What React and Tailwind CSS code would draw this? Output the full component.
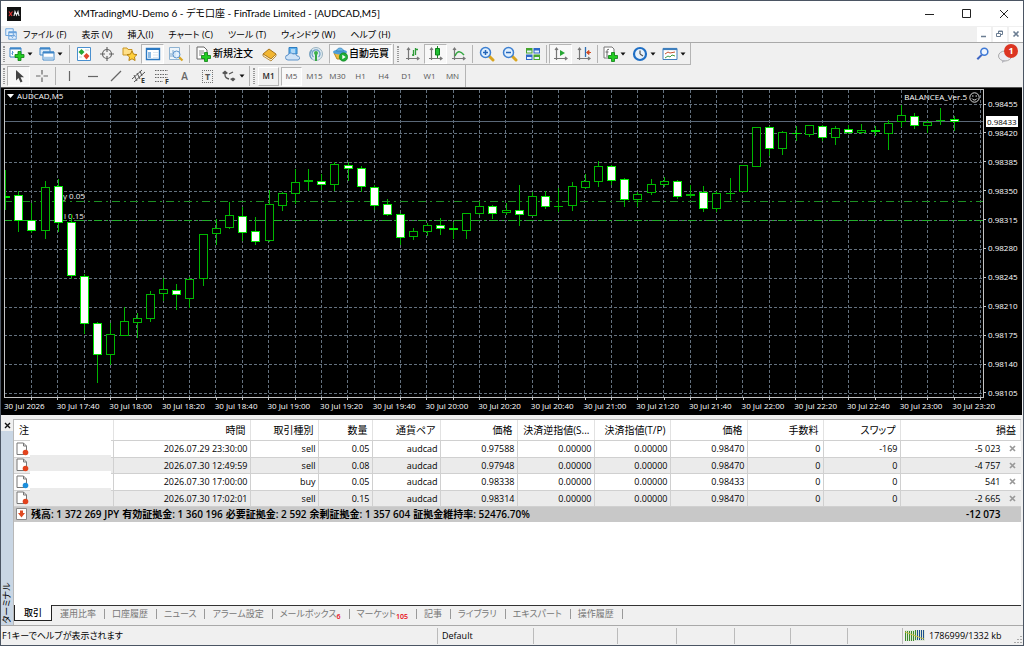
import { useState } from 'react'
import clsx from 'clsx'

const MENUS = ['ファイル (F)', '表示 (V)', '挿入(I)', 'チャート (C)', 'ツール (T)', 'ウィンドウ (W)', 'ヘルプ (H)']
const TIMEFRAMES = ['M1', 'M5', 'M15', 'M30', 'H1', 'H4', 'D1', 'W1', 'MN']

const PRICES = [
  '0.98455', '0.98420', '0.98385', '0.98350', '0.98315', '0.98280',
  '0.98245', '0.98210', '0.98175', '0.98140', '0.98105',
]
const TIMES = [
  '30 Jul 2026', '30 Jul 17:40', '30 Jul 18:00', '30 Jul 18:20', '30 Jul 18:40', '30 Jul 19:00', '30 Jul 19:20',
  '30 Jul 19:40', '30 Jul 20:00', '30 Jul 20:20', '30 Jul 20:40', '30 Jul 21:00', '30 Jul 21:20', '30 Jul 21:40',
  '30 Jul 22:00', '30 Jul 22:20', '30 Jul 22:40', '30 Jul 23:00', '30 Jul 23:20',
]

// [high, body top, body bottom, low, bearish], three units to a pixel
const CANDLES = [
  [247, 325, 330, 365, 1], [308, 322, 398, 432, 1], [346, 397, 428, 435, 1], [280, 297, 428, 452, 0],
  [273, 295, 404, 432, 1], [378, 403, 565, 574, 1], [557, 565, 709, 737, 1], [703, 704, 800, 886, 1],
  [706, 739, 802, 830, 0], [657, 700, 744, 745, 0], [674, 691, 704, 750, 0], [610, 618, 694, 703, 0],
  [570, 603, 617, 638, 0], [588, 605, 620, 666, 1], [567, 573, 632, 661, 0], [437, 439, 572, 594, 0],
  [392, 420, 439, 470, 0], [343, 382, 419, 422, 0], [357, 383, 434, 459, 1], [388, 430, 461, 470, 1],
  [305, 349, 459, 461, 0], [313, 314, 353, 370, 0], [244, 283, 317, 348, 0], [244, 277, 283, 308, 0],
  [257, 279, 291, 305, 1], [222, 229, 290, 308, 0], [221, 232, 242, 278, 1], [233, 240, 296, 311, 1],
  [292, 297, 353, 367, 1], [332, 349, 380, 385, 1], [376, 379, 449, 470, 1], [420, 430, 448, 456, 0],
  [405, 412, 433, 443, 0], [391, 412, 424, 441, 1], [402, 420, 427, 453, 1], [376, 376, 429, 452, 0],
  [343, 354, 377, 380, 0], [352, 354, 377, 392, 1], [346, 366, 374, 380, 0], [292, 366, 380, 413, 1],
  [313, 324, 383, 383, 0], [308, 325, 357, 362, 1], [300, 355, 355, 372, 0], [282, 295, 353, 368, 0],
  [258, 280, 299, 303, 0], [220, 235, 281, 296, 0], [232, 233, 278, 290, 1], [270, 274, 335, 356, 1],
  [313, 319, 335, 356, 0], [274, 289, 315, 322, 0], [268, 280, 290, 296, 0], [275, 280, 328, 332, 1],
  [292, 319, 325, 330, 0], [294, 313, 362, 371, 1], [308, 314, 362, 371, 0], [269, 315, 315, 335, 0],
  [232, 232, 311, 311, 0], [118, 118, 237, 238, 0], [113, 118, 182, 204, 1], [128, 133, 182, 200, 0],
  [115, 134, 139, 158, 1], [110, 112, 140, 148, 0], [110, 115, 150, 158, 1], [114, 121, 150, 170, 0],
  [111, 122, 134, 138, 1], [109, 127, 134, 137, 0], [113, 126, 133, 144, 1], [97, 104, 137, 185, 0],
  [52, 82, 103, 118, 0], [76, 85, 113, 122, 1], [97, 103, 113, 134, 0], [59, 97, 97, 110, 0],
  [85, 93, 101, 128, 1],
]

const COLUMNS = [
  { label: '注', width: 'w-[99px]' },
  { label: '時間', width: 'w-[137px]' },
  { label: '取引種別', width: 'w-[68px]' },
  { label: '数量', width: 'w-[54px]' },
  { label: '通貨ペア', width: 'w-[68px]' },
  { label: '価格', width: 'w-[77px]' },
  { label: '決済逆指値(S...', width: 'w-[77px]' },
  { label: '決済指値(T/P)', width: 'w-[76px]' },
  { label: '価格', width: 'w-[77px]' },
  { label: '手数料', width: 'w-[76px]' },
  { label: 'スワップ', width: 'w-[77px]' },
  { label: '損益', width: '' },
]

const ORDERS = [
  ['2026.07.29 23:30:00', 'sell', '0.05', 'audcad', '0.97588', '0.00000', '0.00000', '0.98470', '0', '-169', '-5 023'],
  ['2026.07.30 12:49:59', 'sell', '0.08', 'audcad', '0.97948', '0.00000', '0.00000', '0.98470', '0', '0', '-4 757'],
  ['2026.07.30 17:00:00', 'buy', '0.05', 'audcad', '0.98338', '0.00000', '0.00000', '0.98433', '0', '0', '541'],
  ['2026.07.30 17:02:01', 'sell', '0.15', 'audcad', '0.98314', '0.00000', '0.00000', '0.98470', '0', '0', '-2 665'],
]

const TABS = [
  { label: '取引' },
  { label: '運用比率' },
  { label: '口座履歴' },
  { label: 'ニュース' },
  { label: 'アラーム設定' },
  { label: 'メールボックス', count: 6 },
  { label: 'マーケット', count: 105 },
  { label: '記事' },
  { label: 'ライブラリ' },
  { label: 'エキスパート' },
  { label: '操作履歴' },
]

function Icon({ children, size = 16 }) {
  return (
    <svg width={size} height={size} viewBox="0 0 16 16" fill="none" className="shrink-0" aria-hidden="true">
      {children}
    </svg>
  )
}

function Plus({ x = 11, y = 11 }) {
  return (
    <path
      transform={`translate(${x} ${y})`}
      d="M-1.5-4.500h3v3h3v3h-3v3h-3v-3h-3v-3h3z"
      fill="#22cc22"
      stroke="#0a7d12"
      strokeWidth=".8"
    />
  )
}

function Axes() {
  return <path d="M3.500 2v12M1 12.500h13M2 4l1.500-2L5 4M12 11l2 1.500-2 1.500" stroke="#777" strokeWidth="1.200" />
}

function Magnifier({ minus }) {
  return (
    <Icon>
      <path d="m10 10 4 4" stroke="#d9a520" strokeWidth="3" strokeLinecap="round" />
      <circle cx="6.500" cy="6.500" r="5" fill="#dff0ff" stroke="#3d7fd0" strokeWidth="1.500" />
      <path d={minus ? 'M4 6.500h5' : 'M4 6.500h5M6.500 4v5'} stroke="#2565b8" strokeWidth="1.500" />
    </Icon>
  )
}

function ToolButton({ label, pressed, children }) {
  return (
    <button
      type="button"
      aria-label={label}
      className={clsx(
        'flex h-5 w-[23px] shrink-0 items-center justify-center border',
        pressed ? 'border-r-white border-b-white border-t-[#b5b5b5] border-l-[#b5b5b5] bg-[#f8f8f8]' : 'border-transparent'
      )}
    >
      {children}
    </button>
  )
}

function DropButton({ label, children }) {
  return (
    <button type="button" aria-label={label} className="mr-1 flex h-5 w-[26px] shrink-0 items-center pl-[2px]">
      {children}
      <Arrow />
    </button>
  )
}

function Arrow() {
  return (
    <svg width="6" height="4" viewBox="0 0 6 4" className="ml-[2px] shrink-0" aria-hidden="true">
      <path d="M.5.500h5L3 3.500z" fill="#111" />
    </svg>
  )
}

function Separator() {
  return <div className="mx-[2px] h-[18px] w-px shrink-0 bg-[#b4b4b4]" />
}

function Grip() {
  return <div className="mx-[2px] h-4 w-[2px] shrink-0 border-x border-dotted border-[#999]" />
}

function TitleBar() {
  return (
    <header className="flex h-[25px] items-center bg-white pl-[6px]">
      <svg width="14" height="14" viewBox="0 0 14 14" aria-label="XM">
        <rect width="14" height="14" fill="#111" />
        <path d="M2 4.500 5 9M5.500 4.500 2 9" stroke="#d33" strokeWidth="1.200" />
        <path d="M7 9l1-4.500L9.500 8 11 4.500 12 9" stroke="#eee" strokeWidth="1.100" fill="none" />
      </svg>
      <h1 className="ml-[53px] grow font-['Lato','Noto_Sans_CJK_JP',sans-serif] text-[10px]">
        XMTradingMU-Demo 6 - デモ口座 - FinTrade Limited - [AUDCAD,M5]
      </h1>
      <div className="flex text-[#222]">
        <button type="button" aria-label="最小化" className="flex w-[37px] justify-center">
          <svg width="10" height="10"><path d="M0 5.500h9" stroke="currentColor" /></svg>
        </button>
        <button type="button" aria-label="最大化" className="flex w-[37px] justify-center">
          <svg width="10" height="10"><path d="M.5.500h8v8h-8z" fill="none" stroke="currentColor" /></svg>
        </button>
        <button type="button" aria-label="閉じる" className="flex w-[38px] justify-center">
          <svg width="10" height="10"><path d="m1 1 8 8m0-8L1 9" stroke="currentColor" /></svg>
        </button>
      </div>
    </header>
  )
}

function MenuBar() {
  return (
    <nav className="flex h-[17px] items-center border-b border-[#a9a9a9] pl-1">
      <Icon size={12}>
        <path d="M1 1h10v9H1zM5 5h10v10H5z" fill="#e6f2fd" stroke="#6aa3dc" strokeWidth="1.300" />
        <path d="M5 6h10" stroke="#6aa3dc" strokeWidth="2" />
        <path d="m6 12 2-2 2 3 2-4 2 3" stroke="#5590d0" />
      </Icon>
      <div className="flex grow pl-[6px]">
        {MENUS.map((name) => (
          <button key={name} type="button" className="mr-[15px] whitespace-nowrap text-[9px] leading-[15px]">
            {name}
          </button>
        ))}
      </div>
      <div className="flex gap-[2px] text-[#6b7d92]">
        <button type="button" aria-label="ウィンドウを最小化" className="flex h-[15px] w-[14px] items-center justify-center bg-white">
          <svg width="8" height="8"><path d="M1 6.500h5" stroke="currentColor" strokeWidth="1.500" /></svg>
        </button>
        <button type="button" aria-label="元に戻す" className="flex h-[15px] w-[14px] items-center justify-center bg-white">
          <svg width="8" height="8"><path d="M.5 3.500h4v3h-4zM2.500 3V1h4v3.500h-2M2 1.500h5" fill="none" stroke="currentColor" /></svg>
        </button>
        <button type="button" aria-label="ウィンドウを閉じる" className="flex h-[15px] w-[14px] items-center justify-center bg-white">
          <svg width="8" height="8"><path d="m1.500 1.500 5 5m0-5-5 5" stroke="currentColor" strokeWidth="1.600" /></svg>
        </button>
      </div>
    </nav>
  )
}

function MainToolbar() {
  return (
    <div className="flex h-[22px]">
      <div className="flex h-[22px] items-center border-r border-b border-[#b4b4b4]">
        <Grip />
        <DropButton label="新規チャート">
          <Icon>
            <path d="M1 2h11v9H1z" fill="#fff" stroke="#3e86c8" />
            <path d="M1 2.500h11" stroke="#3e86c8" strokeWidth="2" />
            <path d="M3.500 5v4M2.500 8l2-2" stroke="#5a9ad5" />
            <Plus x={10.5} y={10} />
          </Icon>
        </DropButton>
        <DropButton label="プロファイル">
          <Icon>
            <path d="M1 2h10v7H1z" fill="#dcebf8" stroke="#3e86c8" />
            <path d="M4 6h11v8H4z" fill="#fff" stroke="#3e86c8" />
            <path d="M1 2.500h10M4 6.500h11" stroke="#3e86c8" strokeWidth="2" />
            <path d="M4.500 12h10" stroke="#a8cbea" strokeWidth="2.500" />
          </Icon>
        </DropButton>
        <Separator />
        <ToolButton label="気配値表示">
          <Icon>
            <path d="M1.500 1.500h13v13h-13z" fill="#fff" stroke="#4a90cf" />
            <path d="M5.500 3 8.500 6l-3 3-3-3z" fill="#25a835" />
            <path d="m10.500 7 3 3-3 3.500-3-3.500z" fill="#e2482e" />
            <path d="M3 11h3M9 4h4" stroke="#c7d6e4" />
          </Icon>
        </ToolButton>
        <ToolButton label="データウィンドウ">
          <Icon>
            <circle cx="8" cy="8" r="4.500" stroke="#666" strokeWidth="1.200" />
            <path d="M8 1v5M8 10v5M1 8h5M10 8h5" stroke="#666" strokeWidth="1.200" />
          </Icon>
        </ToolButton>
        <ToolButton label="ナビゲーター">
          <Icon>
            <path d="M1 2h4l1 1.500h4V9H1z" fill="#ffe08a" stroke="#c99522" />
            <path d="m10 5 1.600 3.200 3.400.4-2.500 2.400.6 3.500-3.100-1.700-3.100 1.700.6-3.500L5 8.600l3.400-.4z" fill="#ffd13b" stroke="#b98312" />
          </Icon>
        </ToolButton>
        <ToolButton label="ターミナル" pressed>
          <Icon>
            <path d="M1.500 2.500h13v11h-13z" fill="#fff" stroke="#2b79c2" strokeWidth="1.400" />
            <path d="M1.500 3h13" stroke="#2b79c2" strokeWidth="2" />
            <path d="M3 6h3v6H3z" fill="#8ebbe4" />
            <path d="M8 6.500h5M8 9h5M8 11.500h5" stroke="#dce6ef" />
          </Icon>
        </ToolButton>
        <ToolButton label="ストラテジーテスター">
          <Icon>
            <path d="M1.500 1.500h10v12h-10z" fill="#eef5fb" stroke="#8fb3d2" />
            <path d="M3 11V7M5 11V4M7 11V6" stroke="#7fa9cf" />
            <path d="m11 11 3.500 3.500" stroke="#d9a520" strokeWidth="2.200" />
            <circle cx="8.500" cy="8.500" r="3.500" fill="#dff0ff" fillOpacity=".7" stroke="#5b93cc" />
          </Icon>
        </ToolButton>
        <Separator />
        <button type="button" className="flex h-5 w-[66px] shrink-0 items-center gap-[2px] pl-[3px] text-[10px] font-medium whitespace-nowrap">
          <Icon>
            <path d="M2 1h7l3 3v9H2z" fill="#fff" stroke="#666" />
            <path d="M4 5h5M4 7h5M4 9h3" stroke="#888" />
            <Plus />
          </Icon>
          新規注文
        </button>
        <ToolButton label="MetaEditor">
          <Icon>
            <path d="m1 8 6-5 7 5-5 5z" fill="#f2b632" stroke="#a8741a" />
            <path d="m1 8 0 2 8 5 5-5V8l-5 5z" fill="#fff3cf" stroke="#a8741a" strokeWidth=".8" />
          </Icon>
        </ToolButton>
        <ToolButton label="VPS">
          <Icon>
            <path d="M4 1.500h8V8H4z" fill="#5fb1ee" stroke="#2d7cc0" />
            <path d="M6 4h4M6 6h4" stroke="#fff" />
            <path d="M3 14a2.500 2.500 0 0 1 0-5 3 3 0 0 1 5-1 3 3 0 0 1 4 2 2 2 0 0 1 1 4z" fill="#cfe3f7" stroke="#5f93c9" />
          </Icon>
        </ToolButton>
        <ToolButton label="シグナル">
          <Icon>
            <circle cx="8" cy="8" r="6.500" fill="#dfeaf0" stroke="#9bb3c0" />
            <path d="M5.500 11a4 4 0 1 1 5 0M4 13a6 6 0 0 1 0-9" stroke="#6d9fc7" strokeWidth="1.200" />
            <path d="M8 7v8" stroke="#36a743" strokeWidth="2" />
            <circle cx="8" cy="7" r="2" fill="#3db14a" />
          </Icon>
        </ToolButton>
        <button type="button" className="ml-[2px] flex h-5 w-[63px] shrink-0 items-center gap-px border border-t-[#b5b5b5] border-r-white border-b-white border-l-[#b5b5b5] bg-[#f8f8f8] pl-[2px] text-[10px] font-medium whitespace-nowrap">
          <Icon>
            <path d="M2 7h12l-2 6H5z" fill="#f1bd3e" stroke="#b98a20" />
            <ellipse cx="8" cy="6" rx="7" ry="2.500" fill="#4f9fd8" />
            <path d="M4.500 5C5 1 11 1 11.500 5z" fill="#6db7e8" stroke="#3380b8" strokeWidth=".7" />
            <circle cx="11.500" cy="11" r="4.200" fill="#1fae36" stroke="#0b7a1e" strokeWidth=".6" />
            <path d="M10.300 8.800v4.400l3.400-2.200z" fill="#fff" />
          </Icon>
          自動売買
        </button>
        <div className="mx-px h-5 w-px bg-[#b4b4b4]" />
        <Grip />
        <ToolButton label="バーチャート">
          <Icon>
            <Axes />
            <path d="M8.500 4v6M8.500 9H7M10.500 2v7M10.500 3.500H13" stroke="#2d9b37" strokeWidth="1.300" />
          </Icon>
        </ToolButton>
        <ToolButton label="ローソク足" pressed>
          <Icon>
            <Axes />
            <path d="M9.500 0v12" stroke="#188a24" />
            <path d="M7.500 2.500h4v6.500h-4z" fill="#1fbf32" stroke="#0d7f1b" />
          </Icon>
        </ToolButton>
        <ToolButton label="ラインチャート">
          <Icon>
            <Axes />
            <path d="M4 10c2-5 5-6 9-1" stroke="#36a743" strokeWidth="1.400" />
          </Icon>
        </ToolButton>
        <Separator />
        <ToolButton label="ズームイン"><Magnifier /></ToolButton>
        <ToolButton label="ズームアウト"><Magnifier minus /></ToolButton>
        <ToolButton label="ウィンドウの整列">
          <Icon>
            <path d="M1 2h6.500v5.500H1zM8.500 8.500H15V14H8.500z" fill="#45a52d" />
            <path d="M8.500 2H15v5.500H8.500zM1 8.500h6.500V14H1z" fill="#2e68c8" />
            <path d="M2 4.500h4.500v2H2zM9.500 4.500H14v2H9.500zM2 11h4.500v2H2zM9.500 11H14v2H9.500z" fill="#e8f3ff" />
          </Icon>
        </ToolButton>
        <Separator />
        <ToolButton label="自動スクロール" pressed>
          <Icon>
            <Axes />
            <path d="M7 4v6l5-3z" fill="#27a735" />
          </Icon>
        </ToolButton>
        <ToolButton label="チャートの右端移動">
          <Icon>
            <Axes />
            <path d="M9.500 1v10" stroke="#2d6fb5" strokeWidth="1.300" />
            <path d="M15 6.500h-4M13 4.500l-2.500 2L13 8.500z" fill="#cf4c25" stroke="#cf4c25" />
          </Icon>
        </ToolButton>
        <Separator />
        <DropButton label="インディケーター">
          <Icon>
            <path d="M2 1h8l2 2v9H2z" fill="#fff" stroke="#777" />
            <path d="M7 3.500c-1.500-.5-2 0-2 2V11M3.500 6h3" stroke="#666" />
            <Plus />
          </Icon>
        </DropButton>
        <DropButton label="時間足設定">
          <Icon>
            <circle cx="8" cy="8" r="6" fill="#e8f2fb" stroke="#1f6fc5" strokeWidth="2.200" />
            <path d="M8 8V4.500M8 8l3 2" stroke="#555" strokeWidth="1.200" />
          </Icon>
        </DropButton>
        <DropButton label="定型チャート">
          <Icon>
            <path d="M1 2.500h14v11H1z" fill="#fff" stroke="#3e7fbd" />
            <path d="M1 3h14" stroke="#3e7fbd" strokeWidth="2.200" />
            <path d="m3 8 3-2 2 1 5-1" stroke="#c65332" />
            <path d="m3 12 3-2 2 1 2-2 3 1" stroke="#3f9b47" />
          </Icon>
        </DropButton>
      </div>
      <div className="ml-auto flex items-center gap-2 pr-[5px]">
        <button type="button" aria-label="検索">
          <Icon size={14}>
            <circle cx="9.500" cy="5.500" r="4" fill="#eef5ff" stroke="#3f7ad6" strokeWidth="1.800" />
            <path d="m6.500 9-5 5" stroke="#3f66c4" strokeWidth="2.400" />
          </Icon>
        </button>
        <button type="button" aria-label="通知 1件" className="relative flex h-5 w-5 items-end">
          <Icon>
            <ellipse cx="7" cy="8" rx="6.500" ry="5" fill="#ececf0" stroke="#aaa" />
            <path d="M4 12v3l4-2.500z" fill="#b9b9c0" />
          </Icon>
          <span className="absolute top-0 right-0 h-[14px] w-[14px] rounded-full bg-[#dc3522] text-center text-[9px] leading-[14px] font-bold text-white">
            1
          </span>
        </button>
      </div>
    </div>
  )
}

function LineToolbar() {
  const [active, setActive] = useState('M5')
  return (
    <div className="flex h-[22px] items-center">
      <Grip />
      <ToolButton label="カーソル" pressed>
        <Icon>
          <path d="M5 2v10.500l2.500-2.500 2 4.500 2-1-2-4.200H13z" fill="#444" />
        </Icon>
      </ToolButton>
      <ToolButton label="クロスヘア">
        <Icon>
          <path d="M8 2v4.500M8 9.500V14M2 8h4.500M9.500 8H14" stroke="#666" strokeWidth="1.200" />
        </Icon>
      </ToolButton>
      <Separator />
      <ToolButton label="垂直線"><Icon><path d="M7.500 3v10" stroke="#666" strokeWidth="1.200" /></Icon></ToolButton>
      <ToolButton label="水平線"><Icon><path d="M3 8.500h10" stroke="#666" strokeWidth="1.200" /></Icon></ToolButton>
      <ToolButton label="トレンドライン"><Icon><path d="M3 13 13 3" stroke="#666" strokeWidth="1.200" /></Icon></ToolButton>
      <ToolButton label="等距離チャネル">
        <Icon>
          <path d="m1 11 10-9M3 14 14 4M3 7l3 6M6 5l3 6M9 3l2 5" stroke="#555" />
          <text x="10" y="15" fontSize="7" fill="#333" fontWeight="bold">E</text>
        </Icon>
      </ToolButton>
      <ToolButton label="フィボナッチ">
        <Icon>
          <path d="M1 2.500h13M1 6.500h13M1 9.500h13M1 13.500h8" stroke="#666" strokeDasharray="1.500 1" />
          <text x="11" y="15.500" fontSize="7" fill="#333" fontWeight="bold">F</text>
        </Icon>
      </ToolButton>
      <ToolButton label="テキスト"><span className="text-[10px] font-semibold text-[#666]">A</span></ToolButton>
      <ToolButton label="ラベル">
        <span className="flex h-[13px] w-[11px] items-center justify-center border border-dotted border-[#777] text-[9px] leading-none font-bold text-[#555]">
          T
        </span>
      </ToolButton>
      <DropButton label="矢印">
        <Icon>
          <path d="m1 5 3-2.500L7 5 4 7zM9 11l3-1.500 2.500 1.500-2.500 2.500z" fill="#555" />
          <path d="M4 7c0 3 2 3.500 4 4M8 6l4-2" stroke="#555" strokeWidth="1.300" />
        </Icon>
      </DropButton>
      <div className="mr-px h-5 w-px bg-[#b4b4b4]" />
      <Grip />
      <div className="flex h-full items-center border-r border-[#b4b4b4] pl-px text-[8px] text-[#555]">
        {TIMEFRAMES.map((tf) => (
          <button
            key={tf}
            type="button"
            onClick={() => setActive(tf)}
            className={clsx(
              'mr-[2px] h-[19px] w-[21px] border',
              tf === active && 'border-t-[#b5b5b5] border-r-white border-b-white border-l-[#b5b5b5] bg-[#f8f8f8]',
              tf !== active && tf === 'M1' && 'border-t-white border-r-[#b5b5b5] border-b-[#b5b5b5] border-l-white font-semibold text-[#222]',
              tf !== active && tf !== 'M1' && 'border-transparent'
            )}
          >
            {tf}
          </button>
        ))}
      </div>
    </div>
  )
}

function Candle({ index, data }) {
  const [high, top, bottom, low, bearish] = data
  const x = Math.round(1 + index * 13.175)
  const y = (v) => Math.round(v / 3) - 2
  const height = Math.max(y(bottom) - y(top), 1)
  return (
    <g>
      <rect x={x} y={y(high)} width="1" height={y(low) - y(high)} fill="#00b400" />
      <rect x={x - 4} y={y(top)} width="9" height={height} fill={bearish ? '#00e800' : '#00b800'} />
      {height > 2 && <rect x={x - 3} y={y(top) + 1} width="7" height={height - 2} fill={bearish ? '#fff' : '#000'} />}
    </g>
  )
}

function Chart() {
  const gridX = Array.from({ length: 37 }, (_, i) => Math.round(27 + i * 26.35) + 0.5)
  const gridY = Array.from({ length: 11 }, (_, i) => Math.round(14 + i * 28.93) + 0.5)
  return (
    <section aria-label="AUDCAD,M5" className="mr-px border-t border-[#555] bg-black pt-px pl-[3px] text-[8px] text-white">
      <div className="flex">
        <div className="relative h-[309px] min-w-0 grow border border-[#c4c4c4]">
          <svg viewBox="1 0 978 307" preserveAspectRatio="none" className="h-full w-full overflow-hidden" role="img" aria-label="ローソク足チャート">
            <g stroke="#64717e" strokeDasharray="3 2">
              {gridX.map((x) => <path key={x} d={`M${x} 0V307`} />)}
              {gridY.map((y) => <path key={y} d={`M0 ${y}H980`} />)}
            </g>
            <path d="M0 31.500H980" stroke="#5a6878" />
            <g stroke="#1c9022" strokeDasharray="8 4 2 4">
              <path d="M0 111.500H980" />
              <path d="M0 130.500H980" stroke="#22b02a" />
            </g>
            <text x="59" y="109" fontSize="8" fill="#eee">y 0.05</text>
            <text x="60" y="129" fontSize="8" fill="#eee">l 0.15</text>
            {CANDLES.map((data, i) => <Candle key={i} index={i} data={data} />)}
          </svg>
          <div className="absolute top-0 left-[2px] flex items-center gap-[3px] leading-3">
            <svg width="7" height="4"><path d="M0 0h7L3.500 4z" fill="#fff" /></svg>
            AUDCAD,M5
          </div>
          <div className="absolute top-px right-[3px] flex items-center gap-[2px] leading-3">
            BALANCEA_Ver.5
            <svg width="11" height="11" viewBox="0 0 11 11" fill="none" stroke="#ddd">
              <circle cx="5.500" cy="5.500" r="4.700" />
              <path d="M3 4h1.500M6.500 4H8M3 6.500c1 2 4 2 5 0" />
            </svg>
          </div>
        </div>
        <div className="relative -mb-px flex w-[38px] shrink-0 flex-col justify-between pt-[9px] leading-3">
          {PRICES.map((price) => (
            <div key={price} className="flex items-center gap-[2px]">
              <span className="h-px w-[2px] bg-[#c4c4c4]" />
              {price}
            </div>
          ))}
          <div className="absolute top-[27px] left-[2px] bg-white px-px leading-[11px] text-black">0.98433</div>
        </div>
      </div>
      <div className="mr-[38px] flex justify-between pr-[3px] pl-[27px]">
        {gridX.map((x) => <span key={x} className="h-[2px] w-px bg-[#c4c4c4]" />)}
      </div>
      <div className="mr-[17px] grid h-[15px] grid-cols-[repeat(19,minmax(0,1fr))] leading-3">
        {TIMES.map((time) => <span key={time} className="whitespace-nowrap">{time}</span>)}
      </div>
    </section>
  )
}

function OrderIcon({ type }) {
  return (
    <svg width="13" height="14" viewBox="0 0 13 14" className="ml-[2px]" aria-hidden="true">
      <path d="M1 1h6.500l3 3v8.500H1z" fill="#fff" stroke="#777" />
      <path d="M7.500 1v3h3" fill="none" stroke="#777" />
      <circle cx="9.500" cy="10.500" r="2.800" fill={type === 'buy' ? '#1e8fdc' : '#e2431e'} />
    </svg>
  )
}

function OrdersTable() {
  return (
    <table className="w-full table-fixed border-collapse text-right text-[9px]">
      <thead>
        <tr className="h-5 text-[10px] leading-[18px]">
          {COLUMNS.map((col, i) => (
            <th
              key={i}
              className={clsx(
                'overflow-hidden border-r border-b border-r-[#e2e2e2] border-b-[#d0d0d0] p-0 pr-1 font-normal whitespace-nowrap',
                col.width,
                i === 0 && 'pl-[5px] text-left'
              )}
            >
              {col.label}
            </th>
          ))}
        </tr>
      </thead>
      <tbody>
        {ORDERS.map((order) => (
          <tr key={order[0]} className="group border-b border-[#d0d0d0] leading-[15px] odd:h-[17px] even:h-4 even:bg-[#ebebeb]">
            <td className="relative border-r border-[#d0d0d0] p-0">
              <OrderIcon type={order[1]} />
              <span className="absolute -top-[3px] right-[2px] left-4 h-[17px] group-odd:bg-white group-even:bg-[#ebebeb]" />
            </td>
            {order.slice(0, -1).map((value, i) => (
              <td key={i} className="border-r border-[#d0d0d0] p-0 pr-[2px] whitespace-nowrap">{value}</td>
            ))}
            <td className="p-0 pr-[5px]">
              <span className="flex items-center justify-end gap-2">
                {order[order.length - 1]}
                <button type="button" aria-label="決済">
                  <svg width="7" height="7"><path d="m1 1 5 5m0-5L1 6" stroke="#999" strokeWidth="1.700" /></svg>
                </button>
              </span>
            </td>
          </tr>
        ))}
      </tbody>
      <tfoot>
        <tr className="h-4 bg-[#c8c8c8] text-[10px] leading-[15px] font-semibold">
          <td colSpan={11} className="p-0">
            <div className="flex items-center gap-[3px] whitespace-nowrap">
              <svg width="11" height="12" viewBox="0 0 11 12" className="mr-px ml-[2px]" aria-hidden="true">
                <path d="M.5.500h10v11H.5z" fill="#fff" stroke="#888" />
                <path d="M4 2.500h3V5h2L5.500 9.500 2 5h2z" fill="#df4a22" />
              </svg>
              <span>残高: 1 372 269 JPY</span>
              <span>有効証拠金: 1 360 196</span>
              <span>必要証拠金: 2 592</span>
              <span>余剰証拠金: 1 357 604</span>
              <span>証拠金維持率: 52476.70%</span>
            </div>
          </td>
          <td className="p-0 pr-5">-12 073</td>
        </tr>
      </tfoot>
    </table>
  )
}

function Terminal() {
  const [tab, setTab] = useState('取引')
  return (
    <section className="mt-1 flex grow">
      <div className="flex w-3 shrink-0 flex-col items-center">
        <button type="button" aria-label="閉じる" className="flex h-3 items-center">
          <svg width="7" height="7"><path d="m1 1 5 5m0-5L1 6" stroke="#111" strokeWidth="1.400" /></svg>
        </button>
        <div className="flex w-full grow items-end justify-center bg-[#c9d6e4]">
          <span className="mb-4 flex h-3 w-3 -rotate-90 items-center justify-center text-[9px] whitespace-nowrap">ターミナル</span>
        </div>
      </div>
      <div className="mr-[2px] flex min-w-0 grow flex-col border-t border-l border-[#b8b8b8] bg-white">
        <div className="grow">
          <OrdersTable />
        </div>
        <div className="flex h-5 border-t border-[#333] bg-[#f0f0f0] text-[9px] text-[#777]">
          {TABS.map((t, i) => (
            <button
              key={t.label}
              type="button"
              onClick={() => setTab(t.label)}
              className={clsx(
                'flex items-center whitespace-nowrap',
                t.label === tab
                  ? '-mt-px mr-px h-4 border-x border-b border-[#222] bg-white px-[9px] font-medium text-black'
                  : 'h-[15px] pl-[7px]'
              )}
            >
              {t.label}
              {t.count && <sub className="bottom-0 -mb-px self-end text-[7px] leading-[10px] font-semibold text-red-600">{t.count}</sub>}
              {i > 0 && <span className="ml-2 h-[10px] w-px bg-[#999]" />}
            </button>
          ))}
        </div>
      </div>
    </section>
  )
}

function StatusBar() {
  return (
    <footer className="flex h-5 items-center border-t border-[#a9a9a9] text-[9px]">
      <div className="min-w-0 grow pl-px">F1キーでヘルプが表示されます</div>
      <div className="flex h-4 w-24 items-center border-l border-[#bbb] pl-1">Default</div>
      <div className="h-4 w-[84px] border-l border-[#bbb]" />
      <div className="h-4 w-[59px] border-l border-[#bbb]" />
      <div className="h-4 w-[58px] border-l border-[#bbb]" />
      <div className="h-4 w-14 border-l border-[#bbb]" />
      <div className="h-4 w-[57px] border-l border-[#bbb]" />
      <div className="h-4 w-[55px] border-l border-[#bbb]" />
      <div className="flex h-4 w-[121px] items-center gap-1 border-l border-[#bbb] pl-[2px]">
        <svg width="20" height="11" aria-hidden="true">
          <rect width="20" height="11" fill="#dfe8d8" />
          {[0, 1, 2, 3, 4, 5, 6, 7, 8, 9].map((n) => (
            <rect key={n} x={n * 2} y={n < 5 ? 1 : 0} width="1" height="10" fill={n < 6 ? '#3c8a2c' : '#1b4e8c'} />
          ))}
          <path d="M0 2 19 9" stroke="#c9c24a" />
        </svg>
        <span className="grow">1786999/1332 kb</span>
        <svg width="9" height="9" className="self-end" aria-hidden="true">
          <path d="M7 1v1M7 4v1M4 4v1M7 7v1M4 7v1M1 7v1" stroke="#aaa" strokeWidth="2" />
        </svg>
      </div>
    </footer>
  )
}

export default function App() {
  return (
    <div className="flex min-h-screen flex-col border border-[#4b5563] bg-[#f0f0f0] font-['Open_Sans','Noto_Sans_CJK_JP',sans-serif] text-black [font-feature-settings:'palt']">
      <TitleBar />
      <MenuBar />
      <MainToolbar />
      <LineToolbar />
      <Chart />
      <Terminal />
      <StatusBar />
    </div>
  )
}
